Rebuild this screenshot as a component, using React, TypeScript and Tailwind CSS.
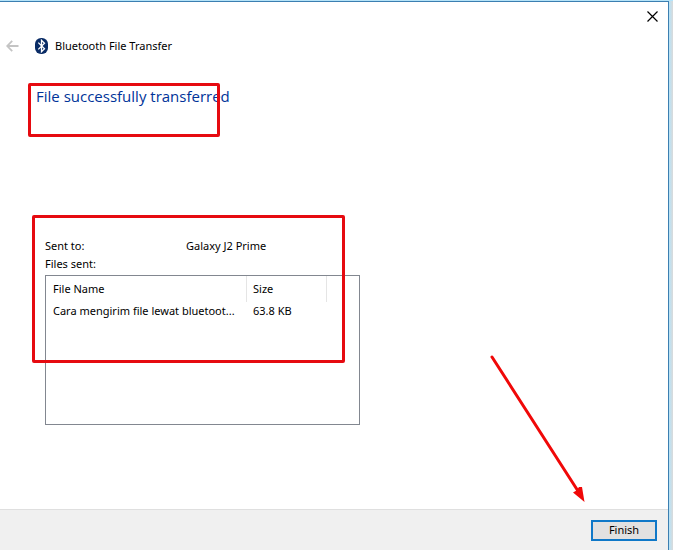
import type { ReactNode } from "react";

type SentFile = {
  name: string;
  size: string;
};

const files: SentFile[] = [{ name: "Cara mengirim file lewat bluetoot...", size: "63.8 KB" }];

function BluetoothIcon() {
  return (
    <svg width="13" height="16" viewBox="0 0 13 16" aria-hidden="true">
      <rect width="13" height="16" rx="6" fill="#0a2c66" />
      <path d="M3.3 4.6 L9.5 10.8 L6.5 13.8 V2.2 L9.5 5.2 L3.3 11.4" fill="none" stroke="#fff" strokeWidth="1.3" />
    </svg>
  );
}

function BackArrow() {
  return (
    <svg width="13" height="12" viewBox="0 0 13 12" fill="none" stroke="#c4c4c4" strokeWidth="1.8" aria-hidden="true">
      <path d="M12.5 6 H1.5 M6.2 0.8 L1.2 6 L6.2 11.2" />
    </svg>
  );
}

function InfoRow({ label, children }: { label: string; children?: ReactNode }) {
  return (
    <div className="flex h-[18px] items-center">
      <dt className="w-[141px]">{label}</dt>
      <dd>{children}</dd>
    </div>
  );
}

function FileTable() {
  return (
    <div className="h-[150px] w-[315px] border border-[#828790] bg-white">
      <table className="w-[281px] table-fixed border-separate border-spacing-0 text-left">
        <thead>
          <tr className="h-[26px]">
            <th className="w-[201px] border-r border-[#e5e5e5] p-0 pl-[7px] font-normal">File Name</th>
            <th className="w-[80px] border-r border-[#e5e5e5] p-0 pl-[6px] font-normal">Size</th>
          </tr>
        </thead>
        <tbody>
          {files.map((file) => (
            <tr key={file.name} className="h-[18px]">
              <td className="p-0 pl-[7px] whitespace-nowrap">{file.name}</td>
              <td className="p-0 pl-[6px]">{file.size}</td>
            </tr>
          ))}
        </tbody>
      </table>
    </div>
  );
}

export default function App() {
  return (
    <div className="flex min-h-screen bg-[#b5e3f8] pt-px font-['Noto_Sans','Open_Sans',sans-serif] text-[11px] leading-4 text-black">
      <div className="flex flex-1 flex-col border-t border-r border-[#3c7fb1] bg-white">
        <header>
          <div className="flex h-7 items-center justify-end pr-[10px]">
            <button type="button" aria-label="Close">
              <svg width="11" height="11" viewBox="0 0 11 11" stroke="#000" strokeWidth="1.2" aria-hidden="true">
                <path d="M0.5 0.5 L10.5 10.5 M10.5 0.5 L0.5 10.5" />
              </svg>
            </button>
          </div>
          <div className="flex h-8 items-center pl-[6px]">
            <button type="button" aria-label="Back" disabled>
              <BackArrow />
            </button>
            <div className="ml-4 flex items-center gap-[7px]">
              <BluetoothIcon />
              <span>Bluetooth File Transfer</span>
            </div>
          </div>
        </header>

        <main className="flex-1 pt-[21px]">
          <div className="relative ml-7 h-[54px] w-[192px] pt-[3px] pl-2">
            <h1 className="font-['Open_Sans','Noto_Sans',sans-serif] text-[15px] leading-5 whitespace-nowrap text-[#003399]">
              File successfully transferred
            </h1>
            <div className="absolute inset-0 rounded-xs border-3 border-[#e60a10]" />
          </div>

          <section className="relative mt-[78px] ml-8 pt-[22px] pl-[13px]">
            <dl className="pb-[2px]">
              <InfoRow label="Sent to:">Galaxy J2 Prime</InfoRow>
              <InfoRow label="Files sent:" />
            </dl>
            <FileTable />
            <div className="absolute top-0 left-0 h-[148px] w-[313px] rounded-xs border-3 border-[#e60a10]" />
          </section>
        </main>

        <footer className="flex h-[41px] items-center justify-end border-t border-[#dfdfdf] bg-[#f0f0f0] pr-[11px]">
          <div className="relative flex">
            <button type="button" className="h-[21px] w-[66px] border-2 border-[#0f78c8] bg-[#e1e1e1] leading-4">
              Finish
            </button>
            <svg
              className="pointer-events-none absolute right-[70px] bottom-[38px]"
              width="99"
              height="150"
              viewBox="0 0 99 150"
              aria-hidden="true"
            >
              <path d="M4 4 L90 138" stroke="#f00808" strokeWidth="3" strokeLinecap="round" />
              <path d="M96.500 149 L85 139.500 L88.500 137.500 L91 134 L94 134 Z" fill="#f00808" />
            </svg>
          </div>
        </footer>
      </div>
      <div className="w-1 bg-linear-to-r from-[#b5e3f8] to-[#dadada]" />
    </div>
  );
}
